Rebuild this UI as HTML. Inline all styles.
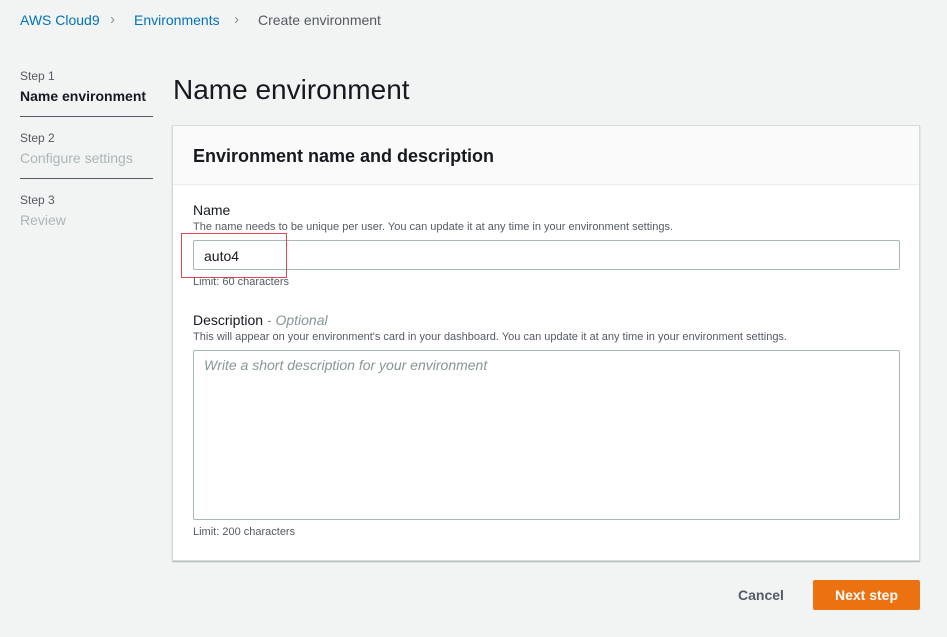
<!DOCTYPE html>
<html><head><style>
*{box-sizing:border-box;margin:0;padding:0}
body{width:947px;height:637px;background:#f2f3f3;font-family:"Liberation Sans",sans-serif;position:relative;overflow:hidden;color:#16191f}
.a{position:absolute;white-space:nowrap}
</style></head><body>
<div class="a" style="left:20px;top:12px;font-size:14px;color:#0073bb">AWS Cloud9</div>
<div class="a" style="left:110px;top:11px;font-size:15px;color:#879596">&#x203A;</div>
<div class="a" style="left:134px;top:12px;font-size:14px;color:#0073bb">Environments</div>
<div class="a" style="left:234px;top:11px;font-size:15px;color:#879596">&#x203A;</div>
<div class="a" style="left:258px;top:12px;font-size:14px;color:#545b64">Create environment</div>

<div class="a" style="left:20px;top:69px;font-size:12px;color:#545b64">Step 1</div>
<div class="a" style="left:20px;top:88px;font-size:14px;font-weight:bold;color:#16191f">Name environment</div>
<div class="a" style="left:20px;top:116px;width:133px;border-top:1px solid #545b64"></div>
<div class="a" style="left:20px;top:131px;font-size:12px;color:#545b64">Step 2</div>
<div class="a" style="left:20px;top:150px;font-size:14px;color:#aab7b8">Configure settings</div>
<div class="a" style="left:20px;top:178px;width:133px;border-top:1px solid #545b64"></div>
<div class="a" style="left:20px;top:193px;font-size:12px;color:#545b64">Step 3</div>
<div class="a" style="left:20px;top:212px;font-size:14px;color:#aab7b8">Review</div>

<div class="a" style="left:173px;top:74px;font-size:28px;color:#16191f">Name environment</div>

<div class="a" style="left:172px;top:125px;width:748px;height:436px;background:#fff;border:1px solid #d5dbdb;box-shadow:0 1px 1px rgba(0,28,36,.3)">
 <div style="height:59px;background:#fafafa;border-bottom:1px solid #eaeded"></div>
</div>
<div class="a" style="left:193px;top:146px;font-size:18px;font-weight:bold">Environment name and description</div>
<div class="a" style="left:193px;top:202px;font-size:14px">Name</div>
<div class="a" style="left:193px;top:221px;font-size:11px;color:#545b64">The name needs to be unique per user. You can update it at any time in your environment settings.</div>
<div class="a" style="left:193px;top:240px;width:707px;height:30px;border:1px solid #aab7b8;border-radius:2px;background:#fff"></div>
<div class="a" style="left:204px;top:248px;font-size:14px">auto4</div>
<div class="a" style="left:181px;top:233px;width:106px;height:45px;border:1px solid #e0494f"></div>
<div class="a" style="left:193px;top:276px;font-size:11px;color:#545b64">Limit: 60 characters</div>
<div class="a" style="left:193px;top:312px;font-size:14px">Description <span style="color:#879596;font-style:italic">- Optional</span></div>
<div class="a" style="left:193px;top:331px;font-size:11px;color:#545b64">This will appear on your environment's card in your dashboard. You can update it at any time in your environment settings.</div>
<div class="a" style="left:193px;top:350px;width:707px;height:170px;border:1px solid #aab7b8;border-radius:2px;background:#fff"></div>
<div class="a" style="left:204px;top:357px;font-size:14px;font-style:italic;color:#879596">Write a short description for your environment</div>
<div class="a" style="left:193px;top:526px;font-size:11px;color:#545b64">Limit: 200 characters</div>

<div class="a" style="left:738px;top:587px;font-size:14px;font-weight:bold;color:#545b64">Cancel</div>
<div class="a" style="left:813px;top:580px;width:107px;height:30px;background:#ec7211;border-radius:2px;color:#fff;font-size:14px;font-weight:bold;text-align:center;line-height:30px">Next step</div>
</body></html>
